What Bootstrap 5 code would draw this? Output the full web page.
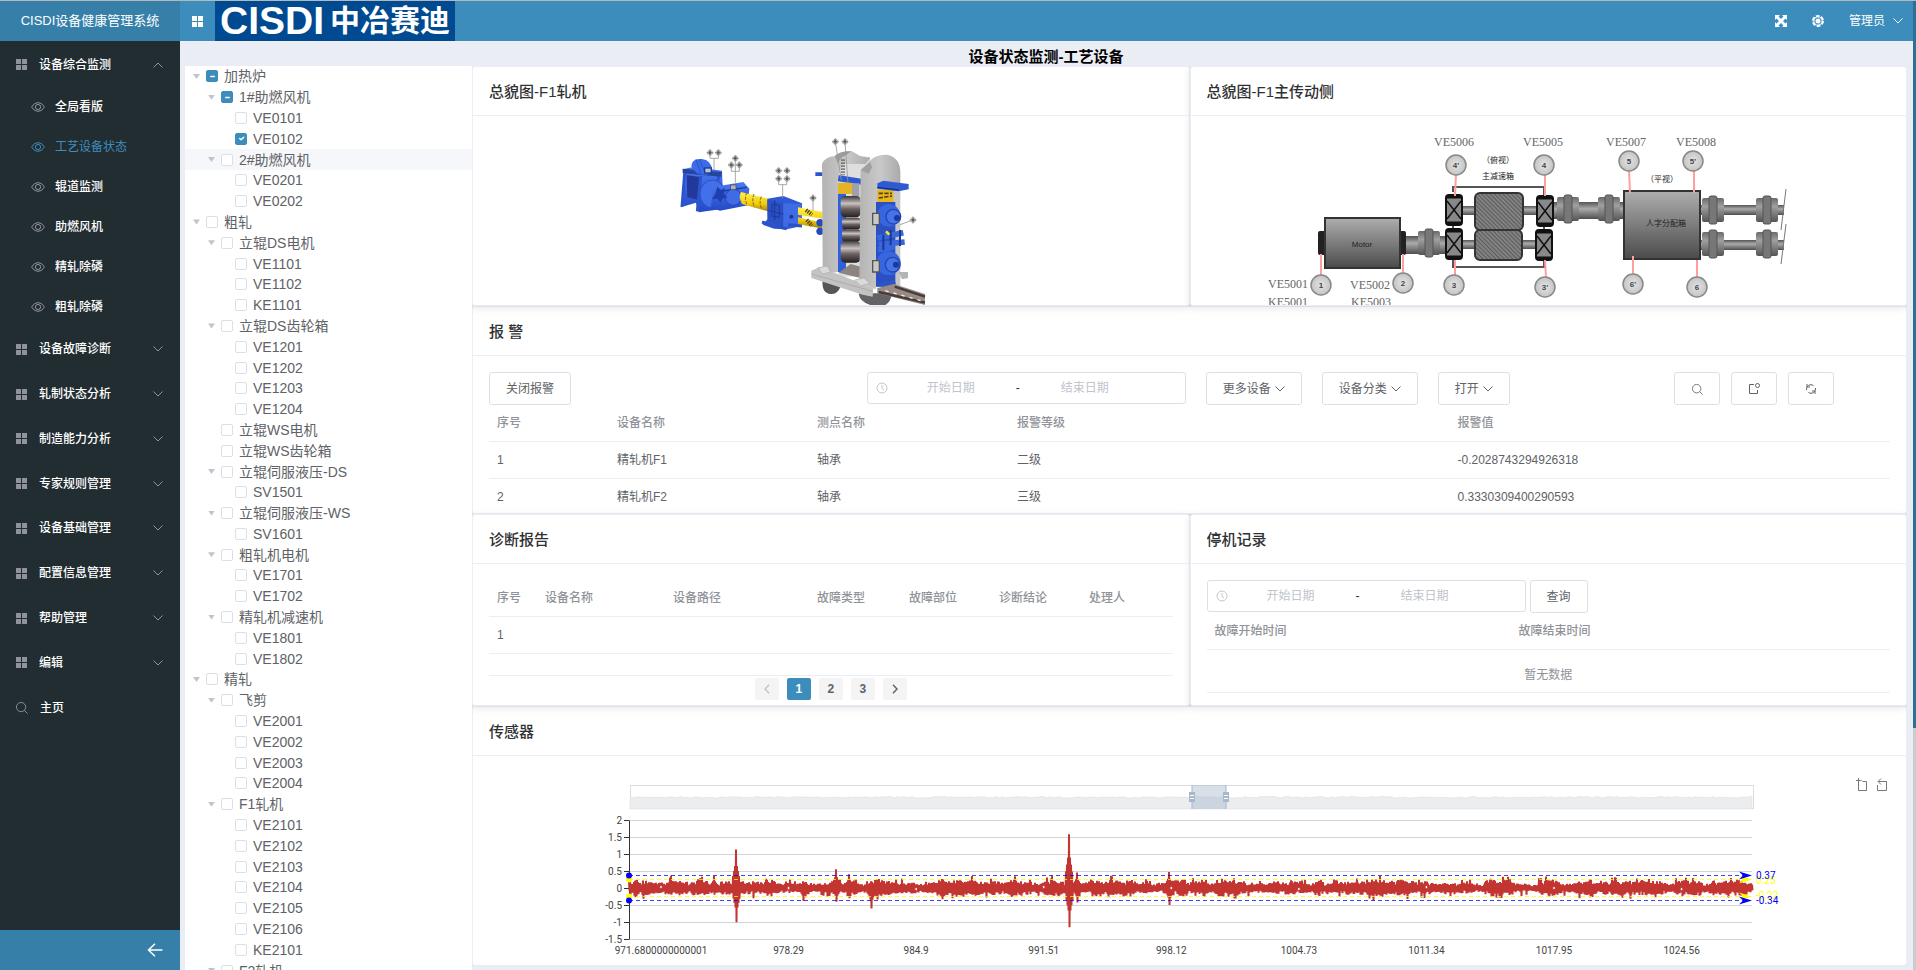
<!DOCTYPE html>
<html lang="zh-CN">
<head>
<meta charset="utf-8">
<meta name="viewport" content="width=device-width, initial-scale=1">
<title>CISDI设备健康管理系统</title>
<link href="https://cdn.jsdelivr.net/npm/bootstrap@5.3.0/dist/css/bootstrap.min.css" rel="stylesheet">
<style>
:root{--brand:#3c8dbc;--brand-dark:#367fa9;--side:#222d32;--line:#ebeef5;--ctl:#dcdfe6;--ink:#606266;--mute:#909399}
body{font-family:"Liberation Sans","Noto Sans CJK SC",sans-serif;font-size:12px;line-height:20px;color:var(--ink);background:#eaeef4;border-top:1px solid #b5b8bb}
a{text-decoration:none}
.side{width:180px;background:var(--side)}
.side nav{padding-top:1px}
.brandname{height:40px;background:var(--brand-dark);color:#fff;font-size:13px}
.topbar{height:40px;background:var(--brand);color:#fff;padding-right:10px}
.topbar button{background:none;border:0;color:#fff;padding:0}
.logo{width:240px;height:40px;background:#004a91;color:#fff;font-weight:700;padding-left:5px;gap:6px;white-space:nowrap}
.logo-lat{font-size:39px;line-height:40px}
.logo-cjk{font-size:30px;line-height:38px}
.menu-item{height:45px;padding:0 17px 0 16px;color:#fff;font-weight:500}
.menu-item span{margin-left:12px}
.menu-item svg{color:#909399}
.submenu a{height:40px;padding-left:31px;color:#fff;font-weight:500}
.submenu a span{margin-left:10px}
.submenu svg{color:#909399}
.submenu a.current,.submenu a.current svg{color:var(--brand);font-weight:400}
.menu-rest{display:grid;grid-auto-rows:1fr;height:403px}
.menu-rest .menu-item{height:auto}
.side-foot{height:40px;background:var(--brand-dark);color:#fff;border:0;padding:0 17px}
.workspace{padding:0 6px 0 5px}
.page-title{font-size:15px;line-height:20px;height:25px;padding-top:6px;color:#000;font-weight:700}
.tree{flex:0 0 287px;height:915px;display:grid;grid-auto-rows:1fr;background:#fff;font-size:14px}
.tree .lv0{padding-left:8px}.tree .lv1{padding-left:23px}.tree .lv2{padding-left:37px}
.tree .hover{background:#f5f7fa}
.caret{width:7px;height:5px;margin-right:6px;background:#c0c4cc;clip-path:polygon(0 0,100% 0,50% 100%)}
.caret.leaf{background:none}
.tree label{margin-left:6px}
.tree .form-check-input{width:12px;height:12px;margin:0;border:1px solid var(--ctl);border-radius:2px;background-size:9px}
.tree .form-check-input:checked,.tree .form-check-input:indeterminate{background-color:var(--brand);border-color:var(--brand)}
.panel{border:1px solid var(--line);border-radius:3px;box-shadow:0 2px 8px rgba(0,0,0,.1);overflow:hidden}
.panel-head{height:49px;padding:0 16px;border-bottom:1px solid var(--line);color:#303133;font-size:15px;line-height:50px;font-weight:500;margin:0}
.panel-body{padding:16px 16px 0}
.figure-body{height:189px}
.alarm-body{height:157px;overflow:hidden}
.report-body{height:141px}
.ctl{height:33px;padding:0 16px;border:1px solid var(--ctl);border-radius:3px;background:#fff;color:var(--ink);font-size:12px}
.menu-btn{margin-left:20px}
.ctl-icon{width:46px;padding:0}
.range{height:32px;border:1px solid var(--ctl);border-radius:3px;padding:0 7px;width:319px;background:#fff}
.range input{border:0;width:124px;padding:0;text-align:center;font-size:12px;background:none}
.range input::placeholder{color:#c0c4cc;opacity:1}
.range i{width:10px;text-align:center;font-style:normal;color:#303133}
.gap-wide{flex-grow:9}
.gap-mid{flex-grow:5}
.grid-table{width:100%;table-layout:fixed;border-collapse:separate;border-spacing:0}
.grid-table th{height:37px;padding:0 8px;border-bottom:1px solid var(--line);color:var(--mute);font-weight:500}
.grid-table td{height:37px;padding:0 8px;border-bottom:1px solid var(--line)}
.empty{height:43px;padding-top:15px;border-bottom:1px solid var(--line);color:var(--mute)}
.report-wrap{height:96px;border-bottom:1px solid var(--line)}
.pager{gap:8px;padding-top:2px;margin:0}
.pager .page-item .page-link{width:24px;height:22px;margin:0;padding:0;border:0;border-radius:2px;background:#f4f4f5;color:var(--ink);font-weight:700;line-height:22px;text-align:center;font-size:12px}
.pager .page-item.active .page-link{background:var(--brand);color:#fff}
.pager .page-item.disabled .page-link{color:#c0c4cc}
.chart-body{height:209px}
.chart-body text{font-family:"Roboto","Liberation Sans",sans-serif;font-size:10px}
.edge{width:3px;background:#c9cbcd}
.edge div{height:75%;background:#2e6f98}
.drive text{font-family:"Liberation Sans","Noto Sans CJK SC",sans-serif}
.drive .tag{font-family:"Liberation Serif",serif;font-size:12px;fill:#666}
</style>
</head>
<body class="vh-100 overflow-hidden d-flex">
<svg width="0" height="0" class="position-absolute" aria-hidden="true">
  <symbol id="i-grid" viewBox="0 0 11 11"><path fill="currentColor" d="M0 0h5v5H0zM6 0h5v5H6zM0 6h5v5H0zM6 6h5v5H6z"/></symbol>
  <symbol id="i-down" viewBox="0 0 10 6"><path fill="none" stroke="currentColor" d="M.5.5 5 5 9.500.5"/></symbol>
  <symbol id="i-eye" viewBox="0 0 14 10"><g fill="none" stroke="currentColor"><path d="M.6 5Q3 .6 7 .6T13.400 5Q11 9.400 7 9.400T.6 5z"/><circle cx="7" cy="5" r="2.600"/></g></symbol>
  <symbol id="i-search" viewBox="0 0 13 13"><path fill="none" stroke="currentColor" d="M10.500 5.500a5 5 0 1 1-10 0 5 5 0 0 1 10 0zM9 9l3.500 3.500"/></symbol>
  <symbol id="i-clock" viewBox="0 0 12 12"><g fill="none" stroke="currentColor"><circle cx="6" cy="6" r="5"/><path d="M6 3v3.500l2 1.500"/></g></symbol>
</svg>

<aside class="side d-flex flex-column flex-shrink-0">
  <div class="brandname d-flex align-items-center justify-content-center flex-shrink-0">CISDI设备健康管理系统</div>
  <nav class="flex-grow-1">
    <a href="#" class="menu-item d-flex align-items-center"><svg width="11" height="11"><use href="#i-grid"/></svg><span>设备综合监测</span><svg class="ms-auto" width="10" height="6" viewBox="0 0 10 6"><path fill="none" stroke="currentColor" d="M.5 5.500 5 1l4.500 4.500"/></svg></a>
    <div class="submenu">
      <a href="#" class="d-flex align-items-center"><svg width="14" height="10"><use href="#i-eye"/></svg><span>全局看版</span></a>
      <a href="#" class="d-flex align-items-center current"><svg width="14" height="10"><use href="#i-eye"/></svg><span>工艺设备状态</span></a>
      <a href="#" class="d-flex align-items-center"><svg width="14" height="10"><use href="#i-eye"/></svg><span>辊道监测</span></a>
      <a href="#" class="d-flex align-items-center"><svg width="14" height="10"><use href="#i-eye"/></svg><span>助燃风机</span></a>
      <a href="#" class="d-flex align-items-center"><svg width="14" height="10"><use href="#i-eye"/></svg><span>精轧除磷</span></a>
      <a href="#" class="d-flex align-items-center"><svg width="14" height="10"><use href="#i-eye"/></svg><span>粗轧除磷</span></a>
    </div>
    <div class="menu-rest">
      <a href="#" class="menu-item d-flex align-items-center"><svg width="11" height="11"><use href="#i-grid"/></svg><span>设备故障诊断</span><svg class="ms-auto" width="10" height="6"><use href="#i-down"/></svg></a>
      <a href="#" class="menu-item d-flex align-items-center"><svg width="11" height="11"><use href="#i-grid"/></svg><span>轧制状态分析</span><svg class="ms-auto" width="10" height="6"><use href="#i-down"/></svg></a>
      <a href="#" class="menu-item d-flex align-items-center"><svg width="11" height="11"><use href="#i-grid"/></svg><span>制造能力分析</span><svg class="ms-auto" width="10" height="6"><use href="#i-down"/></svg></a>
      <a href="#" class="menu-item d-flex align-items-center"><svg width="11" height="11"><use href="#i-grid"/></svg><span>专家规则管理</span><svg class="ms-auto" width="10" height="6"><use href="#i-down"/></svg></a>
      <a href="#" class="menu-item d-flex align-items-center"><svg width="11" height="11"><use href="#i-grid"/></svg><span>设备基础管理</span><svg class="ms-auto" width="10" height="6"><use href="#i-down"/></svg></a>
      <a href="#" class="menu-item d-flex align-items-center"><svg width="11" height="11"><use href="#i-grid"/></svg><span>配置信息管理</span><svg class="ms-auto" width="10" height="6"><use href="#i-down"/></svg></a>
      <a href="#" class="menu-item d-flex align-items-center"><svg width="11" height="11"><use href="#i-grid"/></svg><span>帮助管理</span><svg class="ms-auto" width="10" height="6"><use href="#i-down"/></svg></a>
      <a href="#" class="menu-item d-flex align-items-center"><svg width="11" height="11"><use href="#i-grid"/></svg><span>编辑</span><svg class="ms-auto" width="10" height="6"><use href="#i-down"/></svg></a>
      <a href="#" class="menu-item d-flex align-items-center"><svg width="12" height="12"><use href="#i-search"/></svg><span>主页</span></a>
    </div>
  </nav>
  <button type="button" class="side-foot d-flex align-items-center justify-content-end flex-shrink-0" aria-label="收起菜单"><svg width="16" height="14" viewBox="0 0 16 14"><path fill="none" stroke="#fff" stroke-width="1.500" d="M15.500 7H1.500M8 .8 1.500 7 8 13.200"/></svg></button>
</aside>

<div class="flex-grow-1 d-flex flex-column overflow-hidden">
  <header class="topbar d-flex align-items-center flex-shrink-0">
    <button type="button" class="d-flex ms-2 ps-1 me-2 pe-1" aria-label="菜单"><svg width="11" height="11"><use href="#i-grid"/></svg></button>
    <div class="logo d-flex align-items-center"><span class="logo-lat">CISDI</span><span class="logo-cjk">中冶赛迪</span></div>
    <div class="ms-auto d-flex align-items-center">
      <button type="button" class="d-flex" aria-label="全屏"><svg width="12" height="12" viewBox="0 0 12 12"><path fill="#fff" d="M0 0h5L3.500 1.500 6 4l2.500-2.500L7 0h5v5l-1.500-1.500L8 6l2.500 2.500L12 7v5H7l1.500-1.500L6 8l-2.500 2.500L5 12H0V7l1.500 1.500L4 6 1.500 3.500 0 5z"/></svg></button>
      <button type="button" class="d-flex mx-4" aria-label="设置"><svg width="14" height="14" viewBox="0 0 14 14"><circle cx="7" cy="7" r="5" fill="none" stroke="#fff" stroke-width="2" stroke-dasharray="3.700 1.500"/><circle cx="7" cy="7" r="4.200" fill="none" stroke="#fff"/><circle cx="7" cy="7" r="2.500" fill="#fff"/></svg></button>
      <button type="button" class="d-flex align-items-center">管理员<svg class="ms-2" width="10" height="6"><use href="#i-down"/></svg></button>
    </div>
  </header>

  <main class="workspace flex-grow-1 overflow-hidden">
    <h1 class="page-title mb-0 text-center">设备状态监测-工艺设备</h1>
    <div class="d-flex align-items-start">
      <div class="tree" id="tree"></div>
      <div class="flex-grow-1 overflow-hidden">
        <div class="row g-0">
          <section class="col-6"><div class="panel bg-white">
            <h2 class="panel-head">总貌图-F1轧机</h2>
            <div class="figure-body text-center">
              <svg width="320" height="189" viewBox="93 -12 960 567" role="img" aria-label="F1轧机">
                <defs>
                  <linearGradient id="roll" x2="0" y2="1"><stop stop-color="#3a3536"/><stop offset=".35" stop-color="#c9c2c0"/><stop offset=".6" stop-color="#6c6262"/><stop offset="1" stop-color="#241f20"/></linearGradient>
                  <linearGradient id="pipe" x2="0" y2="1"><stop stop-color="#fff04a"/><stop offset=".6" stop-color="#f2cc10"/><stop offset="1" stop-color="#a88205"/></linearGradient>
                  <linearGradient id="blu" x2="0" y2="1"><stop stop-color="#4a7af2"/><stop offset="1" stop-color="#2449c4"/></linearGradient>
                  <linearGradient id="steel" x2="1" y2="0"><stop stop-color="#b4b4b4"/><stop offset=".5" stop-color="#c9c9c9"/><stop offset="1" stop-color="#aaa"/></linearGradient>
                  <g id="pt"><path d="M-11 0 0-11 11 0 0 11z" fill="#9a9a9a"/><path d="M-8-6 8 6M-8 6 8-6" stroke="#ddd" stroke-width="2"/><circle r="4" fill="#555"/></g>
                </defs>
                <!-- drive motor -->
                <path d="M128 148 162 140 246 152 248 200 262 265 176 277 168 248 122 262 134 180z" fill="url(#blu)"/>
                <path d="M140 165 184 172 176 240 142 232z" fill="#20399a"/>
                <path d="M134 160 126 260M182 168 172 274M238 165 228 200" stroke="#2b55d0" stroke-width="9"/>
                <path d="M128 146 246 156 244 170 128 160z" fill="#25459e"/>
                <path d="M154 138Q156 114 185 117T216 150L202 164Q166 168 154 138z" fill="#3c6be8"/>
                <path d="M168 118 182 160M178 118 196 160" stroke="#2b52c8" stroke-width="3"/>
                <rect x="194" y="144" width="20" height="15" fill="#b8c3d4" stroke="#1f3a94" stroke-width="4"/>
                <ellipse cx="218" cy="222" rx="38" ry="42" fill="#4270ea" stroke="#2b50c4" stroke-width="3"/>
                <!-- coupling and reducer -->
                <path d="M222 200 310 186 328 206 324 256 240 272 212 262z" fill="url(#blu)"/>
                <path d="M230 216 320 202" stroke="#1c3a9d" stroke-width="4"/>
                <ellipse cx="280" cy="232" rx="24" ry="24" fill="#3f6be6" stroke="#2549ba" stroke-width="3"/>
                <path d="M232 200 243 210 254 204 252 222 262 232 247 236 242 248 232 236 216 238 226 222z" fill="#1f3fae"/>
                <rect x="272" y="195" width="16" height="14" fill="#aeb6c4" stroke="#444" stroke-width="2"/>
                <path d="M303 216Q294 232 306 252L384 274 392 238z" fill="url(#pipe)"/>
                <path d="M320 218Q312 236 322 256M342 222Q334 242 344 262M364 230Q356 248 366 268" fill="none" stroke="#7d6510" stroke-width="3" stroke-dasharray="9 4"/>
                <!-- gear box -->
                <path d="M382 236 430 228 486 250 486 318 440 328 402 326 368 314 382 298z" fill="#2f5ad6"/>
                <path d="M382 240 430 250 430 322 384 304z" fill="#2a50c4"/>
                <path d="M430 250 484 252 486 316 430 322z" fill="#3f6ce4"/>
                <path d="M396 252 418 256V292L396 288zM384 272 430 282M404 240V300" fill="none" stroke="#1b3a9c" stroke-width="3"/>
                <path d="M366 306 400 318M402 318 440 326M444 314 486 318" stroke="#2a51c8" stroke-width="9"/>
                <circle cx="454" cy="290" r="6" fill="#1b3691"/>
                <path d="M474 262 548 276V296L474 284zM474 292 548 308V326L474 312z" fill="url(#pipe)"/>
                <path d="M498 270 516 284M500 300 516 316" stroke="#4e430e" stroke-width="12" stroke-dasharray="4 3"/>
                <circle cx="540" cy="308" r="11" fill="#234abf"/><circle cx="540" cy="334" r="11" fill="#234abf"/>
                <!-- mill stand -->
                <path d="M526 157H550V168H526z" fill="#2c54c9"/>
                <path d="M548 480H606Q600 524 572 522T548 480z" fill="#56565a"/>
                <path d="M656 520H756Q750 566 704 558T656 520z" fill="#636366"/>
                <path d="M595 110H690V470H595z" fill="#dedede"/>
                <path d="M594 165 664 176V194L594 184z" fill="#2d58d2"/>
                <path d="M594 188H636V222H594z" fill="#e6b322"/>
                <path d="M594 222H618V456H594z" fill="#2f5fdd"/>
                <path d="M636 190H658V236H636z" fill="#9ea1a8"/>
                <g fill="url(#roll)"><rect x="602" y="228" width="60" height="64" rx="14"/><rect x="606" y="293" width="56" height="34" rx="10"/><rect x="606" y="328" width="56" height="36" rx="10"/><rect x="602" y="362" width="60" height="66" rx="14"/></g>
                <path d="M596 458 632 432 662 440V474z" fill="#8d8380"/>
                <path d="M546 132Q556 108 590 108 604 92 636 94L660 108 692 114 676 132H610Q598 150 594 180V456L566 460 548 440z" fill="url(#steel)"/>
                <path d="M584 108Q600 92 634 94L618 106Q600 112 594 132z" fill="#9c9c9c"/>
                <path d="M606 118V166M612 118V166" stroke="#555" stroke-width="4" stroke-dasharray="5 4"/>
                <path d="M708 200H781V500H708z" fill="#c6c6c6"/>
                <path d="M662 152 692 120Q708 104 740 104 782 112 781 160V205L776 195 766 188H714L708 300V508L690 500 658 484z" fill="url(#steel)"/>
                <path d="M662 150 690 126 696 142 686 162z" fill="#a0a0a0"/>
                <path d="M712 210H760V246H712z" fill="#e8b51d"/><path d="M716 220H756M716 234 756 228" stroke="#57430e" stroke-width="5" stroke-dasharray="13 4"/>
                <path d="M712 190 730 182 806 192V208L776 214 712 206z" fill="#2f5ad2"/><path d="M712 202 776 210" stroke="#173386" stroke-width="4"/>
                <path d="M708 246H766V500H708z" fill="#2a50c4"/>
                <circle cx="746" cy="286" r="34" fill="#3766df"/><circle cx="760" cy="290" r="22" fill="#4474ea" stroke="#2445b0" stroke-width="4"/><circle cx="771" cy="294" r="9" fill="#1d3994"/>
                <circle cx="746" cy="430" r="36" fill="#3766df"/><circle cx="758" cy="434" r="22" fill="#4474ea" stroke="#2445b0" stroke-width="4"/><circle cx="768" cy="434" r="9" fill="#1d3994"/>
                <path d="M712 354 790 338M716 374 794 366M714 390 764 380" stroke="#3767de" stroke-width="17"/><path d="M752 330V376M780 330V378M730 344V390" stroke="#1c3890" stroke-width="6"/>
                <path d="M738 334 748 344" stroke="#ffe02a" stroke-width="8"/>
                <path d="M708 492 762 480 768 490 736 504z" fill="#2d55c8"/>
                <path d="M698 280H718V314H698zM698 422H718V456H698z" fill="#c9c9c9" stroke="#555" stroke-width="4"/>
                <path d="M514 452 540 440 562 450 700 504 698 530 668 524 514 474z" fill="#c3c3c3"/>
                <path d="M514 462 698 514" stroke="#a0a0a0" stroke-width="2"/>
                <path d="M534 444 562 438 572 456 548 462zM644 480 672 474 690 490 662 498z" fill="#dadada" stroke="#aaa" stroke-width="2"/>
                <path d="M776 456H804V474L786 478z" fill="#b4b4b4"/>
                <path d="M712 504 762 492 855 522V555L712 520z" fill="#998a86"/><path d="M716 516 855 548M764 500 855 530" stroke="#463b38" stroke-width="7"/><path d="M736 512 850 544" stroke="#eee" stroke-width="4" stroke-dasharray="10 15"/>
                <!-- measuring points -->
                <g fill="none" stroke="#999" stroke-width="2.500"><path d="M210 98V115H235V98M222 115V150M274 135V154H298V135M286 154V188M286 115V154M416 176V194H440V176M428 194V234M519 234V272M586 66 604 180M615 66 624 190M819 300 780 314"/></g>
                <use href="#pt" x="210" y="98"/><use href="#pt" x="235" y="98"/><use href="#pt" x="286" y="115"/><use href="#pt" x="274" y="135"/><use href="#pt" x="298" y="135"/><use href="#pt" x="416" y="152"/><use href="#pt" x="441" y="152"/><use href="#pt" x="416" y="176"/><use href="#pt" x="441" y="176"/><use href="#pt" x="519" y="234"/><use href="#pt" x="586" y="65"/><use href="#pt" x="615" y="65"/><use href="#pt" x="819" y="300"/>
              </svg>
            </div>
          </div></section>
          <section class="col-6"><div class="panel bg-white">
            <h2 class="panel-head">总貌图-F1主传动侧</h2>
            <div class="figure-body text-center">
              <svg class="drive" width="561" height="189" viewBox="28 6 561 189" role="img" aria-label="F1主传动侧">
                <defs>
                  <linearGradient id="box" x2="0" y2="1"><stop stop-color="#aeaeae"/><stop offset="1" stop-color="#4b4b4b"/></linearGradient>
                  <linearGradient id="bar" x2="0" y2="1"><stop stop-color="#555"/><stop offset=".4" stop-color="#ababab"/><stop offset="1" stop-color="#4e4e4e"/></linearGradient>
                  <linearGradient id="cpl" x2="0" y2="1"><stop stop-color="#6a6a6a"/><stop offset=".35" stop-color="#a0a0a0"/><stop offset="1" stop-color="#555"/></linearGradient>
                  <radialGradient id="ball"><stop stop-color="#e4e4e4"/><stop offset="1" stop-color="#c4c4c4"/></radialGradient>
                  <pattern id="hatch" width="3" height="3" patternUnits="userSpaceOnUse" patternTransform="rotate(-45)"><rect width="3" height="3" fill="#828282"/><path d="M0 0V3" stroke="#5c5c5c" stroke-width="2"/></pattern>
                  <g id="cp"><rect x="-11" y="-12" width="22" height="24" rx="2" fill="url(#cpl)"/><rect x="-4" y="-14" width="8" height="28" rx="2" fill="#777" stroke="#555"/></g>
                  <g id="bear"><rect x="-8" y="-15" width="16" height="30" rx="3" fill="#888" stroke="#111" stroke-width="2"/><path d="M-8-13H8M-8 13H8" stroke="#111" stroke-width="3"/><path d="M-7-9 7 9M-7 9 7-9" stroke="#111" stroke-width="1.500"/></g>
                </defs>
                <path d="M213 82V77H304V90M213 150V157H304V150M213 110V120M304 110V120" fill="none" stroke="#555" stroke-width="2"/>
                <g fill="url(#bar)"><rect x="164" y="126" width="44" height="18"/><rect x="221" y="96" width="78" height="9"/><rect x="221" y="130" width="78" height="9"/><rect x="310" y="92" width="76" height="17"/><rect x="458" y="95" width="86" height="10"/><rect x="458" y="130" width="86" height="10"/></g>
                <rect x="78" y="121" width="8" height="24" rx="2" fill="#222"/><rect x="158" y="121" width="8" height="24" rx="2" fill="#222"/>
                <rect x="85" y="108" width="75" height="50" fill="url(#box)" stroke="#333" stroke-width="2"/>
                <rect x="235" y="83" width="48" height="37" rx="5" fill="url(#hatch)" stroke="#333" stroke-width="2"/><rect x="235" y="120" width="47" height="30" rx="5" fill="url(#hatch)" stroke="#333" stroke-width="2"/>
                <use href="#bear" x="214" y="100"/><use href="#bear" x="305" y="101"/><use href="#bear" x="214" y="134"/><use href="#bear" x="304" y="135"/>
                <use href="#cp" x="189" y="133"/><use href="#cp" x="328" y="99"/><use href="#cp" x="369" y="99"/>
                <rect x="384" y="81" width="76" height="68" fill="url(#box)" stroke="#333" stroke-width="2"/>
                <use href="#cp" x="473" y="100"/><use href="#cp" x="527" y="100"/><use href="#cp" x="473" y="134"/><use href="#cp" x="527" y="134"/>
                <path d="M546 79 541 120M546 114 541 154" stroke="#777"/>
                <g stroke="#ff9f9f" stroke-width="2"><path d="M216 64 215 86M305 64V86M389 60 390 83M454 60V83M81 144V166M163 144V164M215 150V166M305 150 306 168M393 146V164M457 150V168"/></g>
                <g fill="url(#ball)" stroke="#888" stroke-width="1.500"><circle cx="216" cy="55" r="10"/><circle cx="304" cy="55" r="10"/><circle cx="389" cy="51" r="10"/><circle cx="453" cy="51" r="10"/><circle cx="81" cy="175" r="10"/><circle cx="163" cy="173" r="10"/><circle cx="214" cy="175" r="10"/><circle cx="305" cy="177" r="10"/><circle cx="393" cy="174" r="10"/><circle cx="457" cy="177" r="10"/></g>
                <g font-size="8" font-weight="700" text-anchor="middle" fill="#444"><text x="216" y="58">4'</text><text x="304" y="58">4</text><text x="389" y="54">5</text><text x="453" y="54">5'</text><text x="81" y="178">1</text><text x="163" y="176">2</text><text x="214" y="178">3</text><text x="305" y="180">3'</text><text x="393" y="177">6'</text><text x="457" y="180">6</text></g>
                <g font-size="8" text-anchor="middle" fill="#222"><text x="122" y="137">Motor</text><text x="258" y="53">（俯视）</text><text x="258" y="69">主减速箱</text><text x="422" y="72">（平视）</text><text x="426" y="116">人字分配箱</text></g>
                <g><text class="tag" x="194" y="36">VE5006</text><text class="tag" x="283" y="36">VE5005</text><text class="tag" x="366" y="36">VE5007</text><text class="tag" x="436" y="36">VE5008</text><text class="tag" x="28" y="178">VE5001</text><text class="tag" x="28" y="196">KE5001</text><text class="tag" x="110" y="179">VE5002</text><text class="tag" x="111" y="196">KE5003</text></g>
              </svg>
            </div>
          </div></section>
        </div>

        <section class="panel bg-white">
          <h2 class="panel-head">报 警</h2>
          <div class="panel-body alarm-body">
            <div class="d-flex align-items-start">
              <button type="button" class="ctl">关闭报警</button>
              <div class="gap-wide"></div>
              <div class="range d-flex align-items-center">
                <svg width="14" height="12" color="#c0c4cc"><use href="#i-clock"/></svg>
                <input type="text" placeholder="开始日期" aria-label="报警开始日期"><i>-</i><input type="text" placeholder="结束日期" aria-label="报警结束日期">
              </div>
              <button type="button" class="ctl menu-btn">更多设备<svg class="ms-1" width="10" height="6"><use href="#i-down"/></svg></button>
              <button type="button" class="ctl menu-btn">设备分类<svg class="ms-1" width="10" height="6"><use href="#i-down"/></svg></button>
              <button type="button" class="ctl menu-btn">打开<svg class="ms-1" width="10" height="6"><use href="#i-down"/></svg></button>
              <div class="gap-mid"></div>
              <div class="d-flex me-5 pe-2" style="gap:11px">
                <button type="button" class="ctl ctl-icon" aria-label="搜索"><svg width="11" height="11"><use href="#i-search"/></svg></button>
                <button type="button" class="ctl ctl-icon" aria-label="导出"><svg width="12" height="12" viewBox="0 0 12 12"><g fill="none" stroke="currentColor"><path d="M6 1.500H1.500v9h8V7"/><circle cx="9.500" cy="2.500" r="2"/></g></svg></button>
                <button type="button" class="ctl ctl-icon" aria-label="刷新"><svg width="12" height="12" viewBox="0 0 12 12"><path fill="none" stroke="currentColor" d="M1.500 7A4.500 4.500 0 0 1 8.500 2.500M10.500 5A4.500 4.500 0 0 1 3.500 9.500M2 1v3h3M10 11V8H7"/></svg></button>
              </div>
            </div>
            <table class="grid-table">
              <colgroup><col style="width:120px"><col style="width:200px"><col style="width:200px"><col><col></colgroup>
              <thead><tr><th>序号</th><th>设备名称</th><th>测点名称</th><th>报警等级</th><th>报警值</th></tr></thead>
              <tbody><tr><td>1</td><td>精轧机F1</td><td>轴承</td><td>二级</td><td>-0.2028743294926318</td></tr>
              <tr><td>2</td><td>精轧机F2</td><td>轴承</td><td>三级</td><td>0.3330309400290593</td></tr></tbody>
            </table>
          </div>
        </section>

        <div class="row g-0">
          <section class="col-6"><div class="panel bg-white">
            <h2 class="panel-head">诊断报告</h2>
            <div class="panel-body report-body">
              <div class="report-wrap">
                <table class="grid-table">
                  <colgroup><col style="width:48px"><col style="width:128px"><col style="width:144px"><col style="width:92px"><col style="width:90px"><col style="width:90px"><col></colgroup>
                  <thead><tr><th>序号</th><th>设备名称</th><th>设备路径</th><th>故障类型</th><th>故障部位</th><th>诊断结论</th><th>处理人</th></tr></thead>
                  <tbody><tr><td>1</td><td></td><td></td><td></td><td></td><td></td><td></td></tr></tbody>
                </table>
              </div>
              <ul class="pagination pager justify-content-center">
                <li class="page-item disabled"><a class="page-link d-flex align-items-center justify-content-center" href="#" aria-label="上一页"><svg width="6" height="10" viewBox="0 0 6 10"><path fill="none" stroke="currentColor" stroke-width="1.500" d="M5 .8 1 5l4 4.200"/></svg></a></li>
                <li class="page-item active"><a class="page-link" href="#">1</a></li>
                <li class="page-item"><a class="page-link" href="#">2</a></li>
                <li class="page-item"><a class="page-link" href="#">3</a></li>
                <li class="page-item"><a class="page-link d-flex align-items-center justify-content-center" href="#" aria-label="下一页"><svg width="6" height="10" viewBox="0 0 6 10"><path fill="none" stroke="currentColor" stroke-width="1.500" d="M1 .8 5 5 1 9.200"/></svg></a></li>
              </ul>
            </div>
          </div></section>
          <section class="col-6"><div class="panel bg-white">
            <h2 class="panel-head">停机记录</h2>
            <div class="panel-body report-body">
              <div class="d-flex align-items-start">
                <div class="range d-flex align-items-center me-1">
                  <svg width="14" height="12" color="#c0c4cc"><use href="#i-clock"/></svg>
                  <input type="text" placeholder="开始日期" aria-label="停机开始日期"><i>-</i><input type="text" placeholder="结束日期" aria-label="停机结束日期">
                </div>
                <button type="button" class="ctl">查询</button>
              </div>
              <table class="grid-table">
                <colgroup><col style="width:304px"><col></colgroup>
                <thead><tr><th>故障开始时间</th><th>故障结束时间</th></tr></thead>
              </table>
              <div class="empty text-center">暂无数据</div>
            </div>
          </div></section>
        </div>

        <section class="panel bg-white">
          <h2 class="panel-head">传感器</h2>
          <div class="chart-body"><svg id="chart" class="d-block w-100" height="209" role="img" aria-label="传感器波形"></svg></div>
        </section>
      </div>
    </div>
  </main>
</div>
<div class="edge flex-shrink-0"><div></div></div>

<script src="https://cdn.jsdelivr.net/npm/bootstrap@5.3.0/dist/js/bootstrap.bundle.min.js"></script>
<script>
// Equipment tree: [level, name, state]; nodes marked "leaf" have no caret.
const nodes = [[0,'加热炉','part'],[1,'1#助燃风机','part'],[2,'VE0101'],[2,'VE0102','on'],[1,'2#助燃风机','hover'],[2,'VE0201'],[2,'VE0202'],
[0,'粗轧'],[1,'立辊DS电机'],[2,'VE1101'],[2,'VE1102'],[2,'KE1101'],[1,'立辊DS齿轮箱'],[2,'VE1201'],[2,'VE1202'],[2,'VE1203'],[2,'VE1204'],
[1,'立辊WS电机','leaf'],[1,'立辊WS齿轮箱','leaf'],[1,'立辊伺服液压-DS'],[2,'SV1501'],[1,'立辊伺服液压-WS'],[2,'SV1601'],
[1,'粗轧机电机'],[2,'VE1701'],[2,'VE1702'],[1,'精轧机减速机'],[2,'VE1801'],[2,'VE1802'],
[0,'精轧'],[1,'飞剪'],[2,'VE2001'],[2,'VE2002'],[2,'VE2003'],[2,'VE2004'],
[1,'F1轧机'],[2,'VE2101'],[2,'VE2102'],[2,'VE2103'],[2,'VE2104'],[2,'VE2105'],[2,'VE2106'],[2,'KE2101'],[1,'F2轧机']];
const tree = document.getElementById('tree');
nodes.forEach(([lv, name, st], i) => {
  const row = document.createElement('div');
  row.className = `d-flex align-items-center lv${lv}${st === 'hover' ? ' hover' : ''}`;
  row.innerHTML = `<span class="caret${lv === 2 || st === 'leaf' ? ' leaf' : ''}"></span><input class="form-check-input" type="checkbox" id="n${i}"${st === 'on' ? ' checked' : ''}><label for="n${i}">${name}</label>`;
  if (st === 'part') row.querySelector('input').indeterminate = true;
  tree.append(row);
});

// Vibration waveform, drawn to the width of its card.
function drawChart() {
  const svg = document.getElementById('chart'), W = svg.clientWidth;
  const x0 = 156, x1 = W - 154, span = x1 - x0, Y = v => Math.round(132 - v * 34.2) + .5;
  let seed = 7; const rnd = () => (seed = (seed * 16807) % 2147483647) / 2147483647;
  let s = '';
  // overview slider
  let ov = `M${x0 + 1} 53V41`;
  for (let x = x0 + 1; x < x1 + 1; x += 3) ov += `L${x} ${(40.5 + rnd() * 1.5).toFixed(1)}`;
  s += `<rect x="${x0 + 1.5}" y="29.5" width="${span}" height="23" fill="#fff" stroke="#ddd"/><path d="${ov}V53z" fill="#ebedef" stroke="#d5dade" stroke-width=".5"/>`;
  const a = Math.round(x0 + span * .501), b = a + 34;
  s += `<rect x="${a}" y="29" width="34" height="24" fill="#a7b7cc" fill-opacity=".45"/>`;
  for (const h of [a, b]) s += `<path d="M${h} 29V53" stroke="#a7b7cc"/><rect x="${h - 3}" y="36" width="6" height="10" fill="#a7b7cc"/><path d="M${h - 2} 39.5h4M${h - 2} 42.5h4" stroke="#fff"/>`;
  // axes
  for (const v of [2, 1.5, 1, .5, 0, -.5, -1, -1.5]) {
    s += `<path d="M${x0} ${Y(v)}H${x1}" stroke="#d4d4d4"/><path d="M${x0 - 5} ${Y(v)}h5" stroke="#333"/><text x="${x0 - 7}" y="${Y(v) + 3}" text-anchor="end" fill="#444">${v}</text>`;
  }
  s += `<path d="M${x0 + .5} ${Y(2)}V${Y(-1.5)}" stroke="#333"/>`;
  ['971.6800000000001','978.29','984.9','991.51','998.12','1004.73','1011.34','1017.95','1024.56'].forEach((t, i) => {
    s += `<text x="${x0 + 32 + i * span * .1136}" y="198" text-anchor="middle" fill="#444">${t}</text>`;
  });
  const limits = [[.25, '#ff0', 128], [-.22, '#ff0', 143], [.37, '#00f', 123], [-.34, '#00f', 148]];
  // waveform
  const spikes = [[.0957,1.13,-1],[.184,.55,-.4],[.2157,.2,-.6],[.3918,1.57,-1.15],[.4805,.47,-.5],[.0755,.35,-.2],[.037,.36,-.2],[.399,.45,-.42],[.196,.4,-.3],[.305,.35,-.2],[.155,.2,-.38]];
  let d = '', env = .12, goal = .14;
  for (let x = 0; x <= span; x++) {
    if (x % 9 === 0) goal = .09 + rnd() * .13;
    env += (goal - env) * .25;
    let hi = env * (.5 + rnd() * .8), lo = -env * (.5 + rnd() * .8);
    if (rnd() > .94) hi += .11; if (rnd() > .94) lo -= .11;
    for (const [p, h, l] of spikes) {
      const q = Math.abs(x - Math.round(p * span));
      if (q === 0) { hi = h; lo = l; } else if (q < 4) { hi = Math.max(hi, h * (.7 - q * .13)); lo = Math.min(lo, l * (.7 - q * .13)); }
    }
    d += `${x ? 'L' : 'M'}${x0 + x} ${(132 - hi * 34.2).toFixed(1)}L${x0 + x}.5 ${(132 - lo * 34.2).toFixed(1)}`;
  }
  s += `<path d="${d}" fill="none" stroke="#c23531" stroke-width="2" stroke-linejoin="bevel"/>`;
  for (let i = 0; i < 9; i++) s += `<circle cx="${x0 + 32 + i * span * .1136}" cy="${131 + (i % 3)}" r="1.5" fill="#fff" stroke="#c23531"/>`;
  for (const [v, c, ly] of limits) {
    const y = Y(v);
    s += `<path d="M${x0} ${y}H${x1 - 8}" stroke="${c}" stroke-dasharray="4 3" stroke-opacity=".75"/><circle cx="${x0}" cy="${y}" r="3" fill="${c}"/><path d="M${x1} ${y}l-13-4 4 4-4 4z" fill="${c}"/><text x="${x1 + 4}" y="${ly}" fill="${c}">${v}</text>`;
  }
  // zoom and restore tools
  s += `<g fill="none" stroke="#777"><path d="M${W - 50} 24.5h5.500M${W - 47.5} 22v12.500h8v-9h-4"/><path d="M${W - 28.5} 29v5.500h9v-9h-8M${W - 25} 22.500l-3 3 3 3"/></g>`;
  svg.innerHTML = s;
}
drawChart();
addEventListener('resize', drawChart);
</script>
</body>
</html>
